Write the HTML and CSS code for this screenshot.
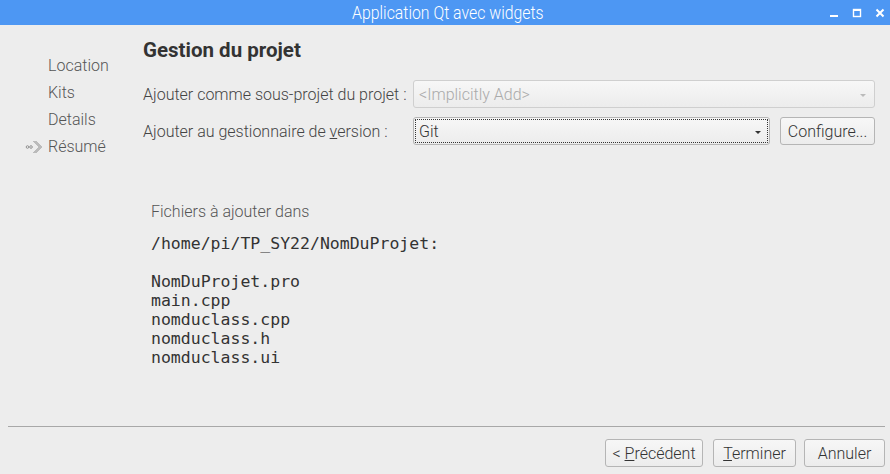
FILE: index.html
```html
<!DOCTYPE html>
<html lang="fr">
<head>
<meta charset="utf-8">
<title>Application Qt avec widgets</title>
<link rel="stylesheet" href="styles.css">
</head>
<body>
<div class="window">
  <header class="titlebar">
    <span class="title">Application Qt avec widgets</span>
    <div class="wm-buttons">
      <svg class="wm" width="10" height="10" viewBox="0 0 10 10"><rect x="1" y="7" width="8" height="2" fill="#fff"/></svg>
      <svg class="wm" width="10" height="10" viewBox="0 0 10 10"><rect x="1.5" y="1.5" width="7" height="7" fill="none" stroke="#fff" stroke-width="1.4"/><rect x="1" y="1" width="8" height="2" fill="#fff"/></svg>
      <svg class="wm" width="10" height="10" viewBox="0 0 10 10"><path d="M1.5 1.5 L8.5 8.5 M8.5 1.5 L1.5 8.5" stroke="#fff" stroke-width="2"/></svg>
    </div>
  </header>
  <div class="content">
    <nav class="sidebar">
      <div class="step">Location</div>
      <div class="step">Kits</div>
      <div class="step">Details</div>
      <div class="step current">
        <svg class="arrow" width="18" height="14" viewBox="0 0 18 14">
          <circle cx="2.5" cy="7" r="1.3" fill="none" stroke="#8a8a8a" stroke-width="0.9"/>
          <circle cx="6" cy="7" r="1.3" fill="none" stroke="#8a8a8a" stroke-width="0.9"/>
          <path d="M8.5 1 L14.5 7 L8.5 13" fill="none" stroke="#8a8a8a" stroke-width="1"/>
          <path d="M10.5 1 L16.5 7 L10.5 13" fill="none" stroke="#8a8a8a" stroke-width="1"/>
        </svg>
        Résumé
      </div>
    </nav>
    <main class="page">
      <h1 class="heading">Gestion du projet</h1>
      <div class="form">
        <div class="row">
          <label class="label">Ajouter comme sous-projet du projet :</label>
          <div class="combo disabled wide">
            <span>&lt;Implicitly Add&gt;</span>
            <span class="caret"></span>
          </div>
        </div>
        <div class="row">
          <label class="label">Ajouter au gestionnaire de <u>v</u>ersion :</label>
          <div class="combo focused">
            <span>Git</span>
            <span class="caret"></span>
          </div>
          <button class="btn configure">Configure...</button>
        </div>
      </div>
      <div class="summary">
        <p class="files-label">Fichiers à ajouter dans</p>
        <pre class="mono path">/home/pi/TP_SY22/NomDuProjet:</pre>
        <pre class="mono files">NomDuProjet.pro
main.cpp
nomduclass.cpp
nomduclass.h
nomduclass.ui</pre>
      </div>
    </main>
  </div>
  <footer class="footer">
    <hr class="sep">
    <div class="buttons">
      <button class="btn">&lt; <u>P</u>récédent</button>
      <button class="btn"><u>T</u>erminer</button>
      <button class="btn">Annuler</button>
    </div>
  </footer>
</div>
</body>
</html>
```

FILE: styles.css
```css
html, body {
  margin: 0;
  padding: 0;
  width: 890px;
  height: 474px;
  overflow: hidden;
  background: #ededed;
  font-family: Roboto, "Liberation Sans", sans-serif;
  font-weight: 300;
}

.window {
  display: flex;
  flex-direction: column;
  height: 474px;
}

.titlebar {
  height: 25px;
  background: #4d97f3;
  display: flex;
  align-items: center;
  justify-content: center;
  position: relative;
  flex: none;
}

.title {
  color: #fff;
  font-size: 18px;
  font-weight: 300;
  transform: scaleX(0.88);
  margin-left: 6px;
  line-height: 25px;
}

.wm-buttons {
  position: absolute;
  right: 5px;
  top: 8px;
  display: flex;
  gap: 13px;
}

.wm { display: block; }

.content {
  display: flex;
  flex: 1;
}

.sidebar {
  width: 143px;
  flex: none;
  padding-top: 31px;
  box-sizing: border-box;
}

.step {
  font-size: 16px;
  color: #555;
  height: 27px;
  line-height: 20px;
  padding-left: 48px;
  position: relative;
}

.arrow {
  position: absolute;
  left: 25px;
  top: 3px;
}

.page {
  flex: 1;
  padding-right: 15px;
}

.heading {
  margin: 13px 0 0 0;
  font-size: 20.5px;
  font-weight: 700;
  color: #333;
  line-height: 24px;
}

.form {
  margin-top: 18px;
  display: flex;
  flex-direction: column;
  gap: 9px;
}

.row {
  display: flex;
  align-items: center;
  height: 28px;
}

.label {
  width: 270px;
  flex: none;
  font-size: 16px;
  color: #444;
}

.combo {
  height: 28px;
  box-sizing: border-box;
  border: 1px solid #b5b5b5;
  border-radius: 3px;
  background: linear-gradient(#f7f7f7, #ececec);
  display: flex;
  align-items: center;
  justify-content: space-between;
  padding: 0 6px 0 5px;
  font-size: 16px;
  color: #333;
  width: 357px;
}

.combo.wide { width: 462px; }

.combo.disabled {
  color: #aaa;
  border-color: #cfcfcf;
}

.combo.focused {
  outline: 1px dotted #333;
  outline-offset: -3px;
}

.caret {
  width: 0;
  height: 0;
  border-left: 3px solid transparent;
  border-right: 3px solid transparent;
  border-top: 3px solid #333;
  margin-right: 2px;
  margin-top: 2px;
}

.combo.disabled .caret { border-top-color: #bbb; }

.btn {
  height: 28px;
  box-sizing: border-box;
  border: 1px solid #b5b5b5;
  border-radius: 3px;
  background: linear-gradient(#f7f7f7, #ececec);
  font-family: Roboto, "Liberation Sans", sans-serif;
  font-weight: 300;
  font-size: 16px;
  color: #333;
  padding: 0 6px;
}

.configure {
  margin-left: 10px;
  width: 95px;
}

.summary {
  margin-top: 57px;
  padding-left: 8px;
}

.files-label {
  margin: 0;
  font-size: 16px;
  color: #555;
  line-height: 20px;
}

.mono {
  font-family: "DejaVu Sans Mono", monospace;
  font-weight: 400;
  font-size: 16.5px;
  color: #333;
  margin: 0;
  line-height: 19px;
}

.path { margin-top: 12px; }
.files { margin-top: 19px; }

.footer {
  flex: none;
  padding: 0 5px 7px 8px;
}

.sep {
  margin: 0;
  border: none;
  border-top: 1px solid #a8a8a8;
}

.buttons {
  display: flex;
  justify-content: flex-end;
  gap: 10px;
  margin-top: 12px;
}

.buttons .btn:nth-child(1) { width: 98px; }
.buttons .btn:nth-child(2) { width: 83px; margin-right: -2px; }
.buttons .btn:nth-child(3) { width: 81px; }
```
